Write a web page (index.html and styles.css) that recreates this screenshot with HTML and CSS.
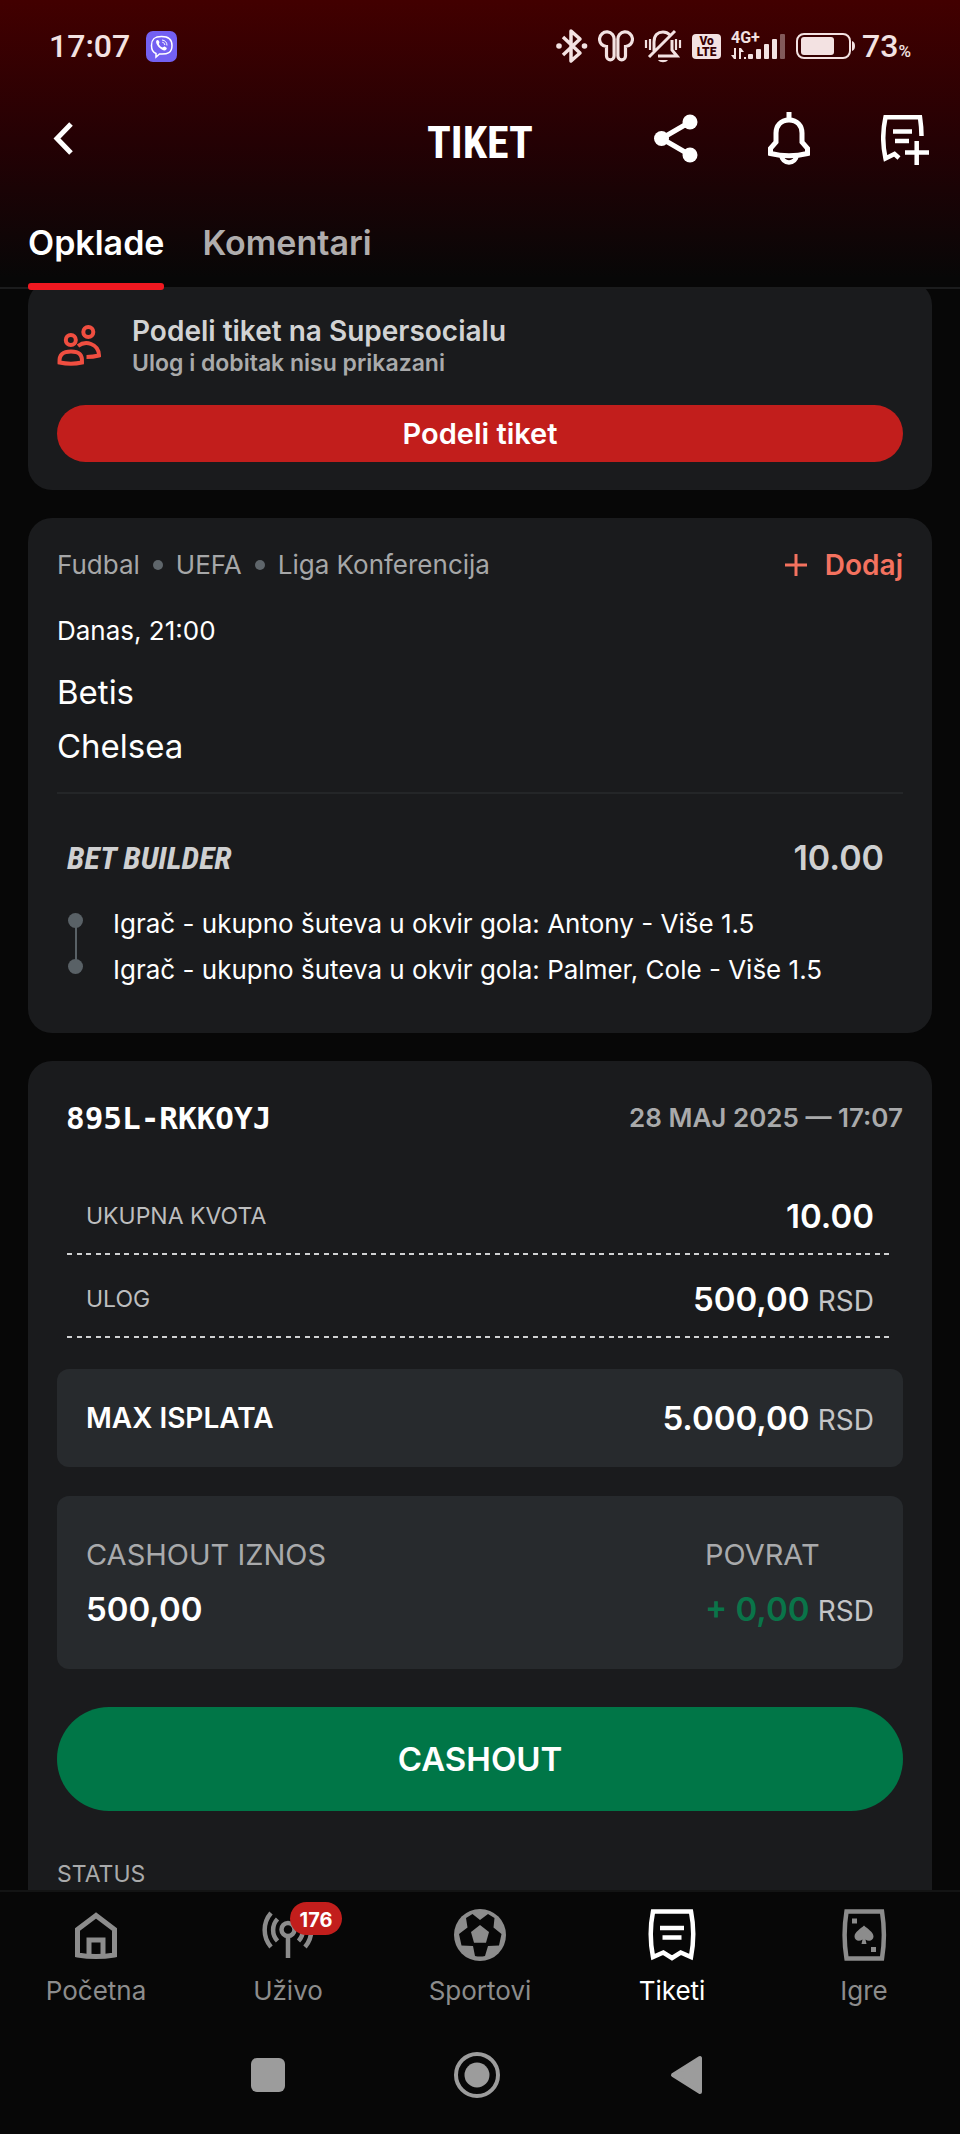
FILE: index.html
```html
<!doctype html>
<html lang="sr-Latn">
<head>
    <meta charset="utf-8">
    <meta name="viewport" content="width=device-width, initial-scale=1">
    <title>Tiket</title>
    <link rel="stylesheet" href="styles.css">
</head>

<body>
    <header class="header">
        <div class="status">
            <div class="status-left">
                <span class="clock">17:07</span>
                <svg width="31" height="31" viewBox="0 0 31 31">
                    <rect width="31" height="31" rx="7" fill="#7360f2"/>
                    <path d="M15.500 5.500c-7 0-10 2.500-10 9 0 4.500 1.500 7 4.500 8v3.500l3.500-3c8.500.6 12.500-1.500 12.500-8.500 0-6.500-3.500-9-10.500-9z" fill="none" stroke="#fff" stroke-width="1.500"/>
                    <path d="M10.500 9.500c1-1 2-.5 2.800 1.200.6 1.400-.8 1.600-.2 2.800.8 1.600 2 2.600 3.400 3 1-.1 1.200-1.400 2.600-.7 1.800 1 2.200 1.700 1.200 2.800-1.600 1.700-4 .6-6.500-1.500-2.600-2.400-4.600-5.900-3.300-7.600z" fill="#fff"/>
                    <path d="M16 9c3 .3 5 2.200 5 5.500M16.300 11.300c1.500.2 2.400 1.200 2.500 2.700" fill="none" stroke="#fff" stroke-width="1"/>
                </svg>
            </div>
            <div class="status-right">
                <!-- bluetooth -->
                <svg width="32" height="36" viewBox="0 0 32 36" fill="none" stroke="currentColor" stroke-width="3.500">
                    <path d="M7 9l17 16-9 8V3l9 8L7 27" stroke-linejoin="round"/>
                    <circle cx="3" cy="18" r="2.800" fill="currentColor" stroke="none"/>
                    <circle cx="28.500" cy="18" r="2.800" fill="currentColor" stroke="none"/>
                </svg>
                <!-- earbuds -->
                <svg width="36" height="36" viewBox="0 0 36 36" fill="none" stroke="currentColor" stroke-width="3.200">
                    <path d="M8.500 18.500V28a3.800 3.800 0 0 0 7.600 0V12A7.300 7.300 0 1 0 8.500 18.500zM27.500 18.500V28a3.800 3.800 0 0 1-7.600 0V12a7.300 7.300 0 1 1 7.600 6.500z"/>
                </svg>
                <!-- ringer off -->
                <svg width="38" height="36" viewBox="0 0 38 36" fill="none" stroke="currentColor" stroke-width="3">
                    <path d="M10 23V14c0-7 4-10 9-10 3 0 5 1 7 3M28 12v10l5 6H14M5 29L31 3"/>
                    <path d="M2 12v8M6 11v11M32 11v11M36 12v8" stroke-width="2.200"/>
                    <path d="M14 32h10c-2 3-8 3-10 0z" fill="currentColor" stroke="none"/>
                </svg>
                <span class="volte">Vo<br>LTE</span>
                <!-- mobile signal -->
                <svg width="55" height="36" viewBox="0 0 55 36" fill="currentColor">
                    <text x="0" y="15" font-family="Roboto, sans-serif" font-size="16" font-weight="700">4G+</text>
                    <path d="M3 20h2v11H3L0 27h3zM8 31V20h2l3 4h-3v7zM13 29h2v2h-2z"/>
                    <rect x="17" y="26" width="5" height="5" rx="1"/>
                    <rect x="25" y="21" width="5" height="10" rx="1"/>
                    <rect x="33" y="16" width="5" height="15" rx="1"/>
                    <rect x="41" y="11" width="5" height="20" rx="1"/>
                    <rect x="49" y="6" width="5" height="25" rx="1" opacity=".4"/>
                </svg>
                <div class="charge">
                    <svg width="60" height="26" viewBox="0 0 60 26">
                        <rect x="1" y="1" width="53" height="24" rx="7" fill="none" stroke="currentColor" stroke-width="2"/>
                        <rect x="5" y="4" width="33" height="18" rx="3" fill="currentColor"/>
                        <path d="M56 8c4 1 4 9 0 10z" fill="currentColor"/>
                    </svg>
                    <span class="clock">73<small>%</small></span>
                </div>
            </div>
        </div>

        <div class="titlebar">
            <button class="icon-btn" aria-label="Nazad">
                <svg width="48" height="56" viewBox="0 0 48 56" fill="none" stroke="currentColor" stroke-width="5">
                    <path d="M40 14L26 28.500 40 43"/>
                </svg>
            </button>
            <h1>TIKET</h1>
            <div class="actions">
                <button class="icon-btn" aria-label="Podeli">
                    <svg width="48" height="56" viewBox="0 0 48 56" fill="currentColor">
                        <path d="M39 12L10.500 28.500 39 45" fill="none" stroke="currentColor" stroke-width="5"/>
                        <circle cx="39" cy="12" r="7.500"/>
                        <circle cx="10.500" cy="28.500" r="7.500"/>
                        <circle cx="39" cy="45" r="7.500"/>
                    </svg>
                </button>
                <button class="icon-btn" aria-label="Obaveštenja">
                    <svg width="48" height="56" viewBox="0 0 48 56" fill="none" stroke="currentColor" stroke-width="5">
                        <path d="M23 2v8"/>
                        <path d="M23 10c-8.500 0-13 6-13 13v9l-5.500 6.500v5c12 3 25 3 37 0v-5L36 32v-9c0-7-4.500-13-13-13z"/>
                        <path d="M15.500 45.500a7.500 7 0 0 0 15 0" stroke-width="4.500"/>
                    </svg>
                </button>
                <button class="icon-btn" aria-label="Dodaj tiket">
                    <svg width="48" height="56" viewBox="0 0 48 56" fill="none" stroke="currentColor" stroke-width="4.500">
                        <path d="M40.500 26c0-6-.5-12-1.500-18.700H4.500C1.500 21 1.500 35 4.500 48.500L13.500 44l4.500 4"/>
                        <path d="M12 21.500h19M14 31h14M24 42.500h24M35.700 31v24"/>
                    </svg>
                </button>
            </div>
        </div>

        <nav class="tabs">
            <a class="tab active" href="#opklade">Opklade</a>
            <a class="tab" href="#komentari">Komentari</a>
        </nav>
    </header>

    <main class="content" id="opklade">
        <section class="card share">
            <div class="share-info">
                <svg width="46" height="46" viewBox="0 0 46 46" fill="none" stroke="#f04e40" stroke-width="4">
                    <circle cx="13.800" cy="16" r="5"/>
                    <circle cx="31.300" cy="8" r="5"/>
                    <path d="M2.500 38.500c-.5-8 3.500-11 11.500-11s11.500 3 11 11c-7 1.500-15 1.500-22.500 0z"/>
                    <path d="M21 22c4-3 9-3.500 13-2 5.500 2 8 6 8 11.500-4 1-8 1.500-12.500 1.500"/>
                </svg>
                <div>
                    <h2>Podeli tiket na Supersocialu</h2>
                    <p>Ulog i dobitak nisu prikazani</p>
                </div>
            </div>
            <button class="btn btn-share">Podeli tiket</button>
        </section>

        <section class="card match">
            <div class="row">
                <ul class="crumbs">
                    <li>Fudbal</li>
                    <li>UEFA</li>
                    <li>Liga Konferencija</li>
                </ul>
                <button class="add">
                    <svg width="24" height="24" viewBox="0 0 24 24" stroke="currentColor" stroke-width="3">
                        <path d="M1 12h22M12 1v22"/>
                    </svg>
                    Dodaj
                </button>
            </div>
            <p class="time">Danas, 21:00</p>
            <p class="team">Betis</p>
            <p class="team">Chelsea</p>
            <div class="bet">
                <div class="row">
                    <h3>BET BUILDER</h3>
                    <span class="odds">10.00</span>
                </div>
                <ul class="legs">
                    <li>Igrač - ukupno šuteva u okvir gola: Antony - Više 1.5</li>
                    <li>Igrač - ukupno šuteva u okvir gola: Palmer, Cole - Više 1.5</li>
                </ul>
            </div>
        </section>

        <section class="card ticket">
            <div class="row ticket-head">
                <span class="code">895L-RKKOYJ</span>
                <span class="date">28 MAJ 2025 — 17:07</span>
            </div>
            <dl class="sums">
                <div class="row sum">
                    <dt>UKUPNA KVOTA</dt>
                    <dd>10.00</dd>
                </div>
                <div class="row sum">
                    <dt>ULOG</dt>
                    <dd>500,00 <small>RSD</small></dd>
                </div>
            </dl>
            <div class="row box">
                <span class="max">MAX ISPLATA</span>
                <span class="amount">5.000,00 <small>RSD</small></span>
            </div>
            <div class="row box cashout">
                <div>
                    <p class="label">CASHOUT IZNOS</p>
                    <p class="amount">500,00</p>
                </div>
                <div>
                    <p class="label">POVRAT</p>
                    <p class="amount"><span class="plus">+ 0,00</span> <small>RSD</small></p>
                </div>
            </div>
            <button class="btn btn-cashout">CASHOUT</button>
            <p class="state">STATUS</p>
        </section>
    </main>

    <footer class="footer">
        <nav class="menu">
            <a href="#pocetna">
                <svg width="52" height="52" viewBox="0 0 52 52" fill="none" stroke="currentColor" stroke-width="5">
                    <path d="M26 6.500L7.500 20.500V46c12 2 25 2 37 0V20.500z"/>
                    <path d="M19 47V31h14v16"/>
                </svg>
                Početna
            </a>
            <a href="#uzivo">
                <span class="live">
                    <svg width="52" height="52" viewBox="0 0 52 52" fill="none" stroke="currentColor" stroke-width="4.500">
                        <circle cx="26" cy="20.500" r="6.500"/>
                        <path d="M26 27v22"/>
                        <path d="M9 4A26 26 0 0 0 9 38M15.500 10A16 16 0 0 0 15.500 32M43 4A26 26 0 0 1 43 38M36.500 10A16 16 0 0 1 36.500 32"/>
                    </svg>
                    <span class="badge">176</span>
                </span>
                Uživo
            </a>
            <a href="#sportovi">
                <svg width="52" height="52" viewBox="0 0 52 52" fill="currentColor">
                    <circle cx="26" cy="26" r="26"/>
                    <path d="M12 9l6.500-4L26 11l8-6 6.500 4-1 9.500 8 6.500L45 36.500l-11 .5-3 10q-5 1-10 0l-2-10-11.500-.5L5 25l8.500-6.500z" fill="#070707"/>
                    <path d="M26 16l9 7-3 10.700H20L17 23z"/>
                </svg>
                Sportovi
            </a>
            <a class="current" href="#tiketi">
                <svg width="52" height="52" viewBox="0 0 52 52" fill="none" stroke="currentColor" stroke-width="4.500">
                    <path d="M7 2.500h38c3 15 3 30 0 45.500L34.700 43.500 26 49l-8.700-5.500L7 48C4 33 4 17.500 7 2.500z"/>
                    <path d="M14 19h24M16.500 28.500h19"/>
                </svg>
                Tiketi
            </a>
            <a href="#igre">
                <svg width="52" height="52" viewBox="0 0 52 52" fill="currentColor">
                    <path d="M8.500 2.500h35.500c2.500 15.500 2.500 31.500 0 47H8.500C6 34 6 18 8.500 2.500z" fill="none" stroke="currentColor" stroke-width="4.500"/>
                    <path d="M14 9.500h5v5h-5zM33 38h5v5h-5z"/>
                    <path d="M26 16.500c3 3 9.500 6.500 9.500 11 0 4-4.500 5.500-8 3l1 4.500h-5l1-4.500c-3.500 2.500-8 1-8-3 0-4.500 6.500-8 9.500-11z"/>
                </svg>
                Igre
            </a>
        </nav>
        <div class="system">
            <button class="icon-btn" aria-label="Nedavno">
                <svg width="48" height="48" viewBox="0 0 48 48" fill="currentColor">
                    <rect x="7" y="7" width="34" height="34" rx="6"/>
                </svg>
            </button>
            <button class="icon-btn" aria-label="Početni ekran">
                <svg width="48" height="48" viewBox="0 0 48 48" fill="currentColor">
                    <circle cx="24" cy="24" r="21" fill="none" stroke="currentColor" stroke-width="4"/>
                    <circle cx="24" cy="24" r="12.500"/>
                </svg>
            </button>
            <button class="icon-btn" aria-label="Nazad">
                <svg width="48" height="48" viewBox="0 0 48 48" fill="currentColor" stroke="currentColor" stroke-width="4" stroke-linejoin="round">
                    <path d="M38 7v34L11 24z"/>
                </svg>
            </button>
        </div>
    </footer>
</body>
</html>
```

FILE: styles.css
```css
* {
    box-sizing: border-box;
    margin: 0;
    padding: 0;
}

body {
    display: flex;
    flex-direction: column;
    height: 100vh;
    background: #070707;
    color: #fff;
    font-family: Inter, sans-serif;
    font-size: 26px;
    line-height: 32px;
}

ul {
    list-style: none;
}

a {
    color: inherit;
    text-decoration: none;
}

button {
    border: 0;
    background: none;
    color: inherit;
    font: inherit;
    cursor: pointer;
}

small {
    line-height: 1;
}

svg {
    display: block;
    flex: none;
}

.row {
    display: flex;
    justify-content: space-between;
    align-items: center;
}

/* header */
.header {
    flex: none;
    background: linear-gradient(#420000, #240104 50%, #070707 97%);
    border-bottom: 2px solid #1b1c1d;
}

.status {
    display: flex;
    justify-content: space-between;
    align-items: center;
    height: 92px;
    padding: 0 49px;
    color: #f3e2e2;
    font-family: Roboto, sans-serif;
}

.status-left,
.status-right,
.charge {
    display: flex;
    align-items: center;
}

.status-left {
    gap: 16px;
}

.status-right {
    gap: 10px;
}

.charge {
    gap: 6px;
}

.clock {
    font-size: 32px;
    font-weight: 500;
    line-height: 40px;
}

.clock small {
    font-size: 17px;
}

.volte {
    width: 29px;
    height: 25px;
    padding-top: 2px;
    border-radius: 4px;
    background: #f3e2e2;
    color: #380002;
    font-size: 12px;
    font-weight: 900;
    line-height: 11px;
    text-align: center;
}

.titlebar {
    display: grid;
    grid-template-columns: 1fr auto 1fr;
    align-items: center;
    height: 92px;
    padding: 0 31px;
}

.titlebar h1 {
    padding-top: 10px;
    font-family: "Roboto Condensed", "Liberation Sans Narrow", sans-serif;
    font-size: 44px;
    line-height: 48px;
}

.icon-btn {
    width: 48px;
}

.actions {
    display: flex;
    justify-content: flex-end;
    gap: 67px;
}

.tabs {
    display: flex;
    gap: 38px;
    padding: 39px 28px 0;
}

.tab {
    position: relative;
    padding-bottom: 24px;
    color: #b0adad;
    font-size: 34px;
    font-weight: 600;
    line-height: 40px;
}

.tab.active {
    color: #fff;
}

.tab.active::after {
    content: "";
    position: absolute;
    left: 0;
    right: 0;
    bottom: -3px;
    height: 7px;
    border-radius: 3px;
    background: #f01820;
}

/* cards */
.content {
    flex: 1;
    min-height: 0;
    overflow: hidden;
    padding: 0 28px;
}

.card {
    margin-bottom: 28px;
    padding: 0 29px;
    border-radius: 24px;
    background: #1a1b1d;
}

.btn {
    display: block;
    width: 100%;
    border-radius: 52px;
    font-weight: 600;
    text-align: center;
}

.share {
    margin-top: -8px;
    padding-top: 34px;
    padding-bottom: 28px;
}

.share-info {
    display: flex;
    align-items: center;
    gap: 29px;
    margin-bottom: 26px;
}

.share h2 {
    color: #d2d3d4;
    font-size: 28px;
    font-weight: 600;
}

.share p {
    color: #a9aaab;
    font-size: 23px;
    font-weight: 600;
}

.btn-share {
    height: 57px;
    background: #c21e1c;
    font-size: 29px;
}

.match {
    padding-top: 31px;
    padding-bottom: 40px;
}

.crumbs {
    display: flex;
    color: #a6a7a8;
}

.crumbs li {
    display: flex;
    align-items: center;
}

.crumbs li + li::before {
    content: "";
    width: 10px;
    height: 10px;
    margin: 0 13px;
    border-radius: 50%;
    background: #5f666b;
}

.add {
    display: flex;
    align-items: center;
    gap: 17px;
    color: #f4725f;
    font-size: 28px;
    font-weight: 600;
}

.time {
    margin: 34px 0 18px;
}

.team {
    font-size: 33px;
    line-height: 54px;
}

.bet {
    margin-top: 19px;
    padding-top: 44px;
    border-top: 2px solid #242628;
}

.bet .row {
    padding: 0 19px 0 10px;
    color: #cfd0d1;
    line-height: 40px;
}

.bet h3 {
    font-family: "Roboto Condensed", "Liberation Sans Narrow", sans-serif;
    font-size: 32px;
    font-style: italic;
}

.odds {
    font-size: 34px;
    font-weight: 600;
}

.legs {
    margin-top: 23px;
    padding-left: 10px;
}

.legs li {
    position: relative;
    padding-left: 46px;
    line-height: 46px;
}

/* dots joined by a thin line */
.legs li::before {
    content: "";
    position: absolute;
    left: 1px;
    top: 12px;
    width: 15px;
    height: 15px;
    border-radius: 50%;
    background: #596166;
}

.legs li + li::after {
    content: "";
    position: absolute;
    left: 8px;
    top: -20px;
    width: 2px;
    height: 34px;
    background: #596166;
}

/* ticket */
.ticket {
    padding-top: 41px;
    padding-bottom: 60px;
}

.ticket-head {
    padding-left: 9px;
}

.code {
    font-family: "DejaVu Sans Mono", monospace;
    font-size: 31px;
    font-weight: 700;
}

.date {
    color: #a9aaab;
    font-weight: 600;
}

.sums {
    margin: 38px 10px 31px;
}

.sum {
    padding: 24px 19px 19px;
    background: repeating-linear-gradient(90deg, #cfd0d1 0 5px, transparent 5px 10px, #cfd0d1 10px 15px, transparent 15px 19px) bottom / 100% 2px no-repeat;
}

.sum dt {
    color: #bdbebf;
    font-size: 23px;
}

.sum dd,
.amount {
    font-size: 33px;
    font-weight: 600;
    line-height: 40px;
}

.sum small,
.amount small {
    color: #c4c5c6;
    font-size: 28px;
    font-weight: 400;
}

.box {
    margin-bottom: 29px;
    padding: 29px;
    border-radius: 12px;
    background: #272a2d;
}

.max {
    font-size: 28px;
    font-weight: 600;
}

.cashout {
    margin-bottom: 38px;
    padding: 39px 29px 40px;
}

.label {
    margin-bottom: 14px;
    color: #a9aaac;
    font-size: 29px;
    line-height: 40px;
}

.plus {
    color: #0a7449;
}

.btn-cashout {
    height: 104px;
    margin-bottom: 49px;
    background: #007647;
    font-size: 33px;
}

.state {
    color: #a9aaab;
    font-size: 23px;
    line-height: 28px;
}

/* bottom */
.footer {
    flex: none;
    border-top: 2px solid #131414;
}

.menu {
    display: grid;
    grid-template-columns: repeat(5, 1fr);
    padding-top: 17px;
}

.menu a {
    display: flex;
    flex-direction: column;
    align-items: center;
    gap: 14px;
    color: #8c8c8c;
}

.menu .current {
    color: #fff;
}

.live {
    position: relative;
}

.badge {
    position: absolute;
    left: 28px;
    top: -7px;
    width: 52px;
    height: 33px;
    border-radius: 17px;
    background: #c21e1c;
    color: #fff;
    font-size: 20px;
    font-weight: 700;
    line-height: 36px;
    text-align: center;
}

.system {
    display: flex;
    justify-content: center;
    gap: 161px;
    padding: 44px 6px 35px 0;
    color: #9c9c9c;
}
```
